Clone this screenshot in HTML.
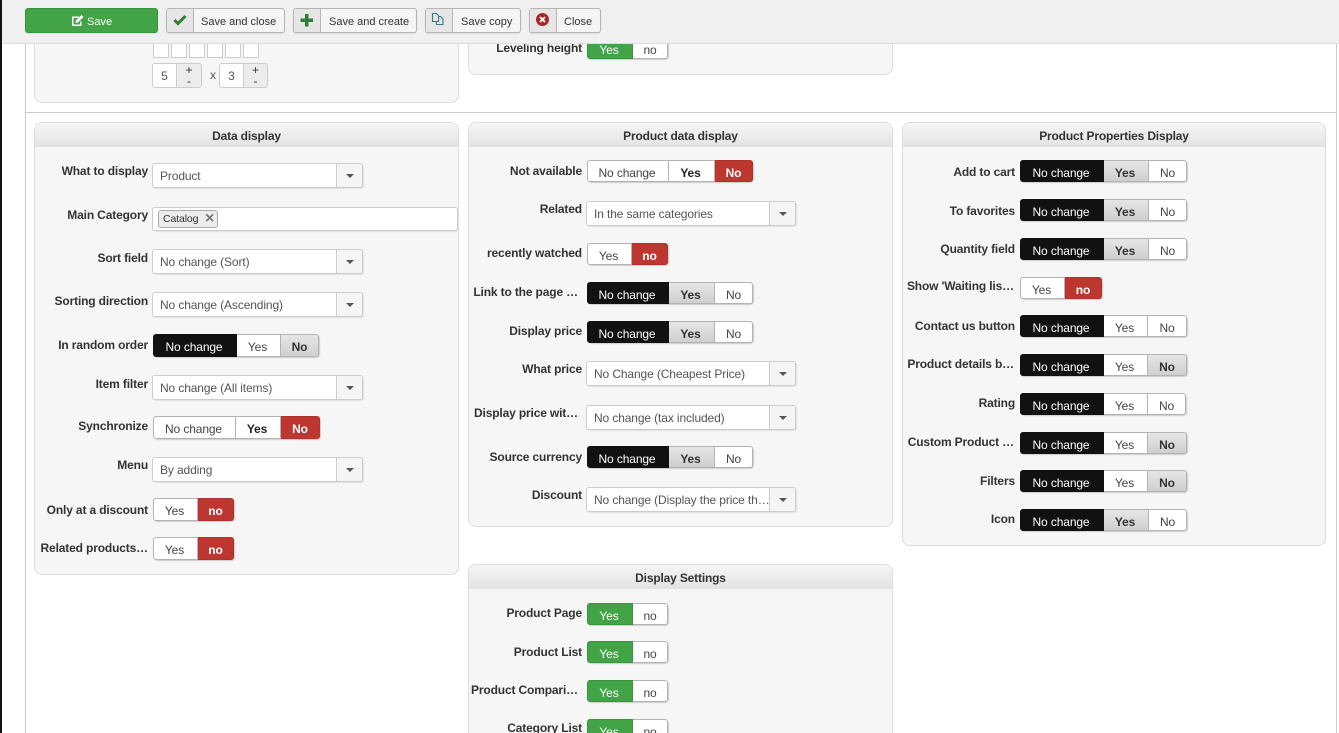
<!DOCTYPE html>
<html><head><meta charset="utf-8"><style>
html,body{margin:0;padding:0;width:1339px;height:733px;overflow:hidden;background:#fff}
body{position:relative;font:12px "Liberation Sans",Arial,sans-serif;color:#333}
div,span{box-sizing:border-box}
.a{position:absolute}
.p{position:absolute;background:#f6f6f6;border:1px solid #ddd;border-radius:8px;overflow:hidden}
.h{position:absolute;left:0;right:0;top:0;height:24px;background:linear-gradient(#f6f6f6,#e2e2e2);font-weight:bold;text-align:center;line-height:26px;color:#333;letter-spacing:-.17px}
.l{position:absolute;font-weight:bold;line-height:16px;text-align:right;white-space:nowrap;color:#333;letter-spacing:-.15px}
.L1{left:34px;width:114px}.L2{left:468px;width:114px}.L3{left:902px;width:113px}
.t{position:absolute;display:flex;height:23px;border-radius:4px;box-shadow:1px 1px 1px #ccc;letter-spacing:-.12px}
.t span{display:block;height:100%;text-align:center;line-height:24px;background:#fff;border:1px solid #b3b3b3;border-left:0;color:#444;padding-right:2px}
.t span:first-child{border-left:1px solid #b3b3b3;border-radius:3px 0 0 3px}
.t span:last-child{border-radius:0 3px 3px 0;padding-right:0}
.t .k{background:#111;border-color:#111!important;color:#fff}
.t .g{background:linear-gradient(#e6e6e6,#cfcfcf);color:#333;font-weight:bold}
.t .r{background:#bd362f;border-color:#b0322c!important;color:#fff;font-weight:bold}
.t .n{background:#43a347;border-color:#3a933e!important;color:#fff}
.t .b{font-weight:bold;color:#222}
.s{position:absolute;height:25px;background:#fff;border:1px solid #ccc;border-radius:3px;box-shadow:1px 1px 1px #e2e2e2;line-height:24px;padding-left:7px;color:#555;white-space:nowrap;overflow:hidden;letter-spacing:-.12px}
.s i{position:absolute;right:0;top:0;bottom:0;width:25px;background:#f5f5f5;border-left:1px solid #ccc}
.s i:after{content:"";position:absolute;left:9px;top:10px;border:4px solid transparent;border-top:4px solid #555;border-bottom:0}
.btn{position:absolute;top:8px;height:25px;background:#f5f5f5;border:1px solid #b5b5b5;border-radius:3px;font-size:11px;line-height:25px;color:#333;box-shadow:0 1px 1px #ddd}
.btn b{position:absolute;left:0;top:0;bottom:0;background:#e6e6e6;border-right:1px solid #b5b5b5;border-radius:3px 0 0 3px}
.btn span{position:absolute;top:0;white-space:nowrap;line-height:25px}
.btn svg{position:absolute}
.c{position:absolute;top:43px;width:16px;height:15px;background:#fff;border:1px solid #ccc;border-top:0}
.sp{position:absolute;top:63px;height:25px;background:#fff;border:1px solid #ccc;border-radius:3px 0 0 3px;text-align:center;line-height:24px;color:#555}
.sq{position:absolute;top:63px;height:25px;width:25px;background:#ececec;border:1px solid #ccc;border-left:0;border-radius:0 3px 3px 0;text-align:center;font-size:12px;line-height:11px;color:#333;padding-top:1px}
</style></head><body>
<div class="a" style="left:0;top:0;width:2px;height:733px;background:#111"></div>
<div class="a" style="left:25px;top:0;width:1px;height:733px;background:#ccc"></div>
<div class="a" style="left:1336px;top:0;width:1px;height:733px;background:#ccc"></div>
<div class="a" style="left:25px;top:112px;width:1311px;height:1px;background:#ccc"></div>

<div class="p" style="left:34px;top:20px;width:425px;height:83px"></div>
<div class="p" style="left:468px;top:20px;width:425px;height:55px"></div>
<div class="c" style="left:153px"></div><div class="c" style="left:171px"></div><div class="c" style="left:189px"></div><div class="c" style="left:207px"></div><div class="c" style="left:225px"></div><div class="c" style="left:243px"></div>
<div class="sp" style="left:152px;width:25px">5</div><div class="sq" style="left:177px">+<br>-</div>
<div class="a" style="left:210px;top:68px;color:#555">x</div>
<div class="sp" style="left:219px;width:25px">3</div><div class="sq" style="left:244px;width:24px">+<br>-</div>
<div class="l L2" style="top:40px">Leveling height</div>
<div class="t" style="left:587px;top:37px;height:22px"><span class="n" style="width:46px">Yes</span><span style="width:35px">no</span></div>

<div class="a" style="left:2px;top:0;width:1337px;height:44px;background:#f0f0f0;border-bottom:1px solid #ddd"></div>
<div class="btn" style="left:25px;width:133px;background:#43a347;border-color:#3a933e;color:#fff">
<svg style="left:45px;top:5px" width="13" height="13" viewBox="0 0 13 13"><path d="M1 2.500h7v1.500H2.500v6.500h6.500V7.500h1.500V12H1z" fill="#fff"/><path d="M5 6.500L10.500 1 12.500 3 7 8.500 4.500 9z" fill="#fff"/></svg>
<span style="left:61px;color:#fff;top:1px">Save</span></div>
<div class="btn" style="left:166px;width:119px"><b style="width:26px"></b>
<svg style="left:6px;top:5px" width="14" height="12" viewBox="0 0 14 12"><path d="M1.500 6L5 9.500 12.500 2" fill="none" stroke="#2f7d32" stroke-width="3"/></svg>
<span style="left:34px;top:1px">Save and close</span></div>
<div class="btn" style="left:293px;width:124px"><b style="width:26px"></b>
<svg style="left:6px;top:4px" width="14" height="14" viewBox="0 0 14 14"><path d="M5 1h3.500v4.500H13V9H8.500v4.500H5V9H.5V5.500H5z" fill="#2f7d32"/></svg>
<span style="left:35px;top:1px">Save and create</span></div>
<div class="btn" style="left:425px;width:96px"><b style="width:26px"></b>
<svg style="left:5px;top:3px" width="14" height="14" viewBox="0 0 14 14"><path d="M1.500 1.500h4l2 2v6h-6zM7.500 4.500h2l2.500 2.500v5.500H5.500v-3" fill="none" stroke="#3d7a80" stroke-width="1.100"/></svg>
<span style="left:35px;top:1px">Save copy</span></div>
<div class="btn" style="left:529px;width:72px"><b style="width:26px"></b>
<svg style="left:5px;top:3px" width="15" height="15" viewBox="0 0 15 15"><circle cx="7.500" cy="7.500" r="6.500" fill="#a5282a"/><path d="M5 5l5 5M10 5l-5 5" stroke="#fff" stroke-width="1.800"/></svg>
<span style="left:34px;top:1px">Close</span></div>

<div class="p" style="left:34px;top:122px;width:425px;height:453px"><div class="h">Data display</div></div>
<div class="p" style="left:468px;top:122px;width:425px;height:405px"><div class="h">Product data display</div></div>
<div class="p" style="left:902px;top:122px;width:424px;height:424px"><div class="h">Product Properties Display</div></div>
<div class="p" style="left:468px;top:564px;width:425px;height:200px"><div class="h">Display Settings</div></div>

<div class="l L1" style="top:163px">What to display</div>
<div class="s" style="left:152px;top:163px;width:211px">Product<i></i></div>
<div class="l L1" style="top:207px">Main Category</div>
<div class="s" style="left:152px;top:207px;width:306px;height:24px;padding:0"><div class="a" style="left:5px;top:2px;width:60px;height:18px;background:#ececec;border:1px solid #aaa;border-radius:3px;font-size:10.500px;line-height:16px;padding-left:4px;color:#333">Catalog <span style="color:#777;font-weight:bold;font-size:16px;line-height:16px;position:absolute;left:46px;top:0">×</span></div></div>
<div class="l L1" style="top:250px">Sort field</div>
<div class="s" style="left:152px;top:249px;width:211px">No change (Sort)<i></i></div>
<div class="l L1" style="top:293px">Sorting direction</div>
<div class="s" style="left:152px;top:292px;width:211px">No change (Ascending)<i></i></div>
<div class="l L1" style="top:337px">In random order</div>
<div class="t" style="left:153px;top:334px"><span class="k" style="width:84px">No change</span><span style="width:44px">Yes</span><span class="g" style="width:38px">No</span></div>
<div class="l L1" style="top:376px">Item filter</div>
<div class="s" style="left:152px;top:375px;width:211px">No change (All items)<i></i></div>
<div class="l L1" style="top:418px">Synchronize</div>
<div class="t" style="left:153px;top:416px"><span style="width:83px">No change</span><span class="b" style="width:45px">Yes</span><span class="r" style="width:39px">No</span></div>
<div class="l L1" style="top:457px">Menu</div>
<div class="s" style="left:152px;top:457px;width:211px">By adding<i></i></div>
<div class="l L1" style="top:502px">Only at a discount</div>
<div class="t" style="left:153px;top:498px"><span style="width:45px">Yes</span><span class="r" style="width:36px">no</span></div>
<div class="l L1" style="top:540px">Related products…</div>
<div class="t" style="left:153px;top:537px"><span style="width:45px">Yes</span><span class="r" style="width:36px">no</span></div>

<div class="l L2" style="top:163px">Not available</div>
<div class="t" style="left:587px;top:160px;height:22px"><span style="width:82px">No change</span><span class="b" style="width:46px">Yes</span><span class="r" style="width:38px">No</span></div>
<div class="l L2" style="top:201px">Related</div>
<div class="s" style="left:586px;top:201px;width:210px">In the same categories<i></i></div>
<div class="l L2" style="top:245px">recently watched</div>
<div class="t" style="left:587px;top:243px;height:22px"><span style="width:45px">Yes</span><span class="r" style="width:36px">no</span></div>
<div class="l L2" style="top:284px;width:110px">Link to the page …</div>
<div class="t" style="left:587px;top:282px;height:22px"><span class="k" style="width:82px">No change</span><span class="g" style="width:46px">Yes</span><span style="width:38px">No</span></div>
<div class="l L2" style="top:323px">Display price</div>
<div class="t" style="left:587px;top:321px;height:22px"><span class="k" style="width:82px">No change</span><span class="g" style="width:46px">Yes</span><span style="width:38px">No</span></div>
<div class="l L2" style="top:361px">What price</div>
<div class="s" style="left:586px;top:361px;width:210px">No Change (Cheapest Price)<i></i></div>
<div class="l L2" style="top:405px;width:110px">Display price wit…</div>
<div class="s" style="left:586px;top:405px;width:210px">No change (tax included)<i></i></div>
<div class="l L2" style="top:449px">Source currency</div>
<div class="t" style="left:587px;top:446px;height:22px"><span class="k" style="width:82px">No change</span><span class="g" style="width:46px">Yes</span><span style="width:38px">No</span></div>
<div class="l L2" style="top:487px">Discount</div>
<div class="s" style="left:586px;top:487px;width:210px">No change (Display the price th…<i></i></div>

<div class="l L3" style="top:164px">Add to cart</div>
<div class="t" style="left:1020px;top:160px;height:22px"><span class="k" style="width:84px">No change</span><span class="g" style="width:45px">Yes</span><span style="width:38px">No</span></div>
<div class="l L3" style="top:203px">To favorites</div>
<div class="t" style="left:1020px;top:199px;height:22px"><span class="k" style="width:84px">No change</span><span class="g" style="width:45px">Yes</span><span style="width:38px">No</span></div>
<div class="l L3" style="top:241px">Quantity field</div>
<div class="t" style="left:1020px;top:238px;height:22px"><span class="k" style="width:84px">No change</span><span class="g" style="width:45px">Yes</span><span style="width:38px">No</span></div>
<div class="l L3" style="top:278px;width:112px">Show 'Waiting lis…</div>
<div class="t" style="left:1020px;top:277px;height:22px"><span style="width:45px">Yes</span><span class="r" style="width:37px">no</span></div>
<div class="l L3" style="top:318px">Contact us button</div>
<div class="t" style="left:1020px;top:315px;height:22px"><span class="k" style="width:84px">No change</span><span style="width:44px">Yes</span><span style="width:39px">No</span></div>
<div class="l L3" style="top:356px;width:112px">Product details b…</div>
<div class="t" style="left:1020px;top:354px;height:22px"><span class="k" style="width:84px">No change</span><span style="width:44px">Yes</span><span class="g" style="width:39px">No</span></div>
<div class="l L3" style="top:395px">Rating</div>
<div class="t" style="left:1020px;top:393px;height:22px"><span class="k" style="width:84px">No change</span><span style="width:44px">Yes</span><span style="width:38px">No</span></div>
<div class="l L3" style="top:434px;width:112px">Custom Product …</div>
<div class="t" style="left:1020px;top:432px;height:22px"><span class="k" style="width:84px">No change</span><span style="width:44px">Yes</span><span class="g" style="width:39px">No</span></div>
<div class="l L3" style="top:473px">Filters</div>
<div class="t" style="left:1020px;top:470px;height:22px"><span class="k" style="width:84px">No change</span><span style="width:44px">Yes</span><span class="g" style="width:39px">No</span></div>
<div class="l L3" style="top:511px">Icon</div>
<div class="t" style="left:1020px;top:509px;height:22px"><span class="k" style="width:84px">No change</span><span class="g" style="width:45px">Yes</span><span style="width:38px">No</span></div>

<div class="l L2" style="top:605px">Product Page</div>
<div class="t" style="left:587px;top:603px;height:22px"><span class="n" style="width:46px">Yes</span><span style="width:35px">no</span></div>
<div class="l L2" style="top:644px">Product List</div>
<div class="t" style="left:587px;top:641px;height:22px"><span class="n" style="width:46px">Yes</span><span style="width:35px">no</span></div>
<div class="l L2" style="top:682px;width:110px">Product Compari…</div>
<div class="t" style="left:587px;top:680px;height:22px"><span class="n" style="width:46px">Yes</span><span style="width:35px">no</span></div>
<div class="l L2" style="top:720px">Category List</div>
<div class="t" style="left:587px;top:719px;height:22px"><span class="n" style="width:46px">Yes</span><span style="width:35px">no</span></div>
</body></html>
